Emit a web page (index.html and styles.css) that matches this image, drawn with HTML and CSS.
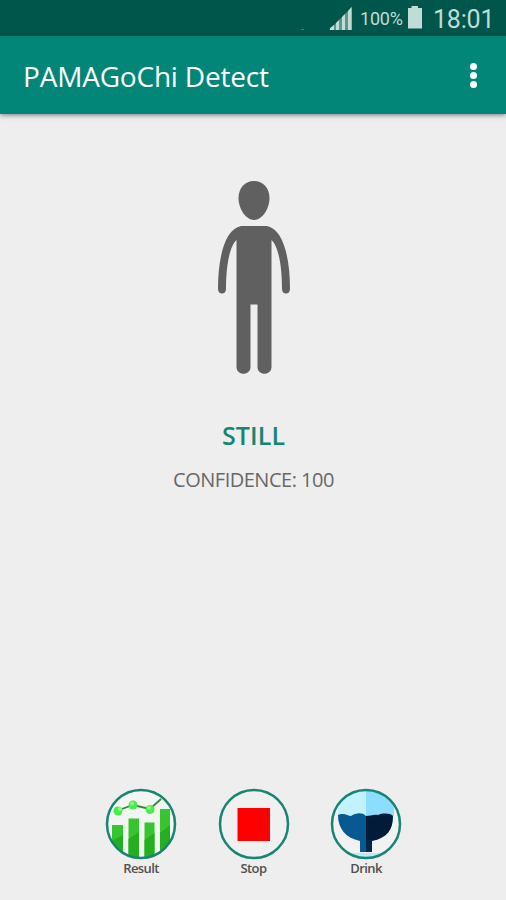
FILE: index.html
```html
<!DOCTYPE html>
<html lang="en">
<head>
    <meta charset="UTF-8">
    <meta name="viewport" content="width=device-width, initial-scale=1.0">
    <title>PAMAGoChi Detect</title>
    <link rel="stylesheet" href="styles.css">
</head>
<body>
    <div class="screen">
        <div class="status-bar">
            <span class="notice"></span>
            <svg class="signal" width="24" height="24" viewBox="0 0 24 24">
                <path d="M0 24 L23 1 V24 Z" fill="#5f958d"/>
                <path d="M1 24V22L5 19V24Z M7 24V17L10 14V24Z M13 24V11L16 8V24Z M19 24V5L22.5 1V24Z" fill="#c0dcd7"/>
            </svg>
            <span class="percent">100%</span>
            <svg class="battery" width="16" height="24" viewBox="0 0 16 24">
                <path d="M4.5 0H11V2H15V22.500H1V2H4.500Z" fill="#c0dcd7"/>
            </svg>
            <span class="clock">18:01</span>
        </div>

        <header class="toolbar">
            <h1>PAMAGoChi Detect</h1>
            <div class="menu"><i></i><i></i><i></i></div>
        </header>

        <main class="content">
            <svg class="person" width="74" height="196" viewBox="0 0 74 196" fill="#606060">
                <path d="M37 1C46 1 52.500 8 52.500 18C52.500 29 45 40 37 40C29 40 21.500 29 21.500 18C21.500 8 28 1 37 1Z"/>
                <path d="M24 46H50C66 49 73 77 73 109C73 115 65 115 65 109C65 84 61 66 54.500 60V187C54.500 196 40.500 196 40.500 187V124.500H33.500V187C33.500 196 19.500 196 19.500 187V60C13 66 9 84 9 109C9 115 1 115 1 109C1 77 8 49 24 46Z"/>
            </svg>
            <div class="activity">STILL</div>
            <div class="confidence">CONFIDENCE: 100</div>
        </main>

        <nav class="actions">
            <div class="action">
                <svg width="72" height="72" viewBox="0 0 72 72">
                    <defs>
                        <clipPath id="circle"><circle cx="36" cy="36" r="33.500"/></clipPath>
                    </defs>
                    <circle cx="36" cy="36" r="34" fill="#f3f5f3"/>
                    <g clip-path="url(#circle)">
                        <path d="M7 37H18V72H7Z M23.500 30.500H34V72H23.500Z M39.500 34.500H49.500V72H39.500Z M55 21H65V72H55Z" fill="#35c52e"/>
                        <path d="M7 53L18 47V72H7Z M23.500 51L34 44V72H23.500Z M39.500 52L49.500 45V72H39.500Z M55 45L65 37V72H55Z" fill="#24af21"/>
                        <path d="M14 22L28 17L45 21L56 11" fill="none" stroke="#36863a" stroke-width="1.800"/>
                        <g fill="#46ee49">
                            <circle cx="13" cy="23" r="4.500"/>
                            <circle cx="28" cy="17" r="4.500"/>
                            <circle cx="45" cy="21.500" r="4.500"/>
                        </g>
                        <g fill="#8ff78d">
                            <circle cx="15" cy="21" r="2"/>
                            <circle cx="27" cy="15.500" r="2"/>
                            <circle cx="44" cy="20" r="2"/>
                        </g>
                    </g>
                    <circle cx="36" cy="36" r="34" fill="none" stroke="#168572" stroke-width="2.500"/>
                </svg>
                <span>Result</span>
            </div>
            <div class="action">
                <svg width="72" height="72" viewBox="0 0 72 72">
                    <circle cx="36" cy="36" r="34" fill="#f0f0f0" stroke="#168572" stroke-width="2.500"/>
                    <rect x="19.500" y="20" width="32.500" height="33" fill="#f00"/>
                </svg>
                <span>Stop</span>
            </div>
            <div class="action">
                <svg width="72" height="72" viewBox="0 0 72 72">
                    <circle cx="36" cy="36" r="34" fill="#f2f2f2"/>
                    <g clip-path="url(#circle)">
                        <path d="M8 0H36V40H8Z" fill="#c2f1ff"/>
                        <path d="M36 0H64V40H36Z" fill="#8cddfe"/>
                        <path d="M8 27C8 41 16 50 30 53V64H42V53C57 50 63 42 63 28L72 28V66H0V27Z" fill="#f2f2f2"/>
                        <path d="M18 65H54V72H18Z" fill="#b9ebfb"/>
                        <path d="M8 27C14 24 18 28 21 28C26 25 32 24 36 28V64H30V53C16 50 8 41 8 27Z" fill="#075a91"/>
                        <path d="M36 28C40 28 44 26 48 27C53 25 60 25 63 28C63 42 57 50 42 53H36Z" fill="#021b38"/>
                        <path d="M36 52H42V64H36Z" fill="#03264a"/>
                    </g>
                    <circle cx="36" cy="36" r="34" fill="none" stroke="#168572" stroke-width="2.500"/>
                </svg>
                <span>Drink</span>
            </div>
        </nav>
    </div>
</body>
</html>
```
FILE: styles.css
```css
body {
    margin: 0;
    background-color: #eeeeee;
    font-family: "Open Sans", "Noto Sans", sans-serif;
}
.screen {
    display: flex;
    flex-direction: column;
    height: 900px;
    overflow: hidden;
}
.status-bar {
    display: flex;
    align-items: center;
    justify-content: flex-end;
    height: 36px;
    box-sizing: border-box;
    padding-right: 12px;
    background-color: #00564b;
    color: #c0dcd7;
    font-family: Roboto, sans-serif;
}
.notice {
    width: 3px;
    height: 1px;
    margin: 22px 25px 0 0;
    background-color: #3b7d72;
}
.signal {
    margin-right: 7px;
}
.percent {
    width: 43px;
    margin-top: 1px;
    font-size: 18px;
    letter-spacing: -0.2px;
    white-space: nowrap;
}
.battery {
    margin: 0 10px 0 4px;
}
.clock {
    width: 61px;
    margin-top: 2px;
    font-size: 25px;
    letter-spacing: -0.2px;
    white-space: nowrap;
}
.toolbar {
    display: flex;
    align-items: center;
    justify-content: space-between;
    height: 78px;
    box-sizing: border-box;
    padding: 0 29px 0 23px;
    background-color: #028677;
    box-shadow: 0 1px 5px rgba(0, 0, 0, 0.5);
}
h1 {
    margin: 1px 0 0;
    color: #fff;
    font-size: 28px;
    font-weight: 500;
    line-height: 38px;
    letter-spacing: -0.2px;
    white-space: nowrap;
}
.menu {
    display: flex;
    flex-direction: column;
    gap: 2px;
}
.menu i {
    width: 7px;
    height: 7px;
    border-radius: 50%;
    background-color: #fff;
}
.content {
    display: flex;
    flex: 1;
    flex-direction: column;
    align-items: center;
    padding: 66px 0 0 1px;
}
.activity {
    margin-top: 42px;
    color: #168572;
    font-size: 25px;
    font-weight: 600;
    line-height: 34px;
    letter-spacing: 0.1px;
}
.confidence {
    margin-top: 14px;
    color: #686868;
    font-size: 20px;
    font-weight: 400;
    line-height: 28px;
    letter-spacing: -0.5px;
}
.actions {
    display: flex;
    justify-content: center;
    gap: 40.5px;
    height: 112px;
    padding-left: 1px;
}
.action {
    display: flex;
    flex-direction: column;
    align-items: center;
    width: 72px;
    color: #505050;
    font-size: 13px;
    font-weight: 600;
    line-height: 16px;
    letter-spacing: -0.6px;
}
```
